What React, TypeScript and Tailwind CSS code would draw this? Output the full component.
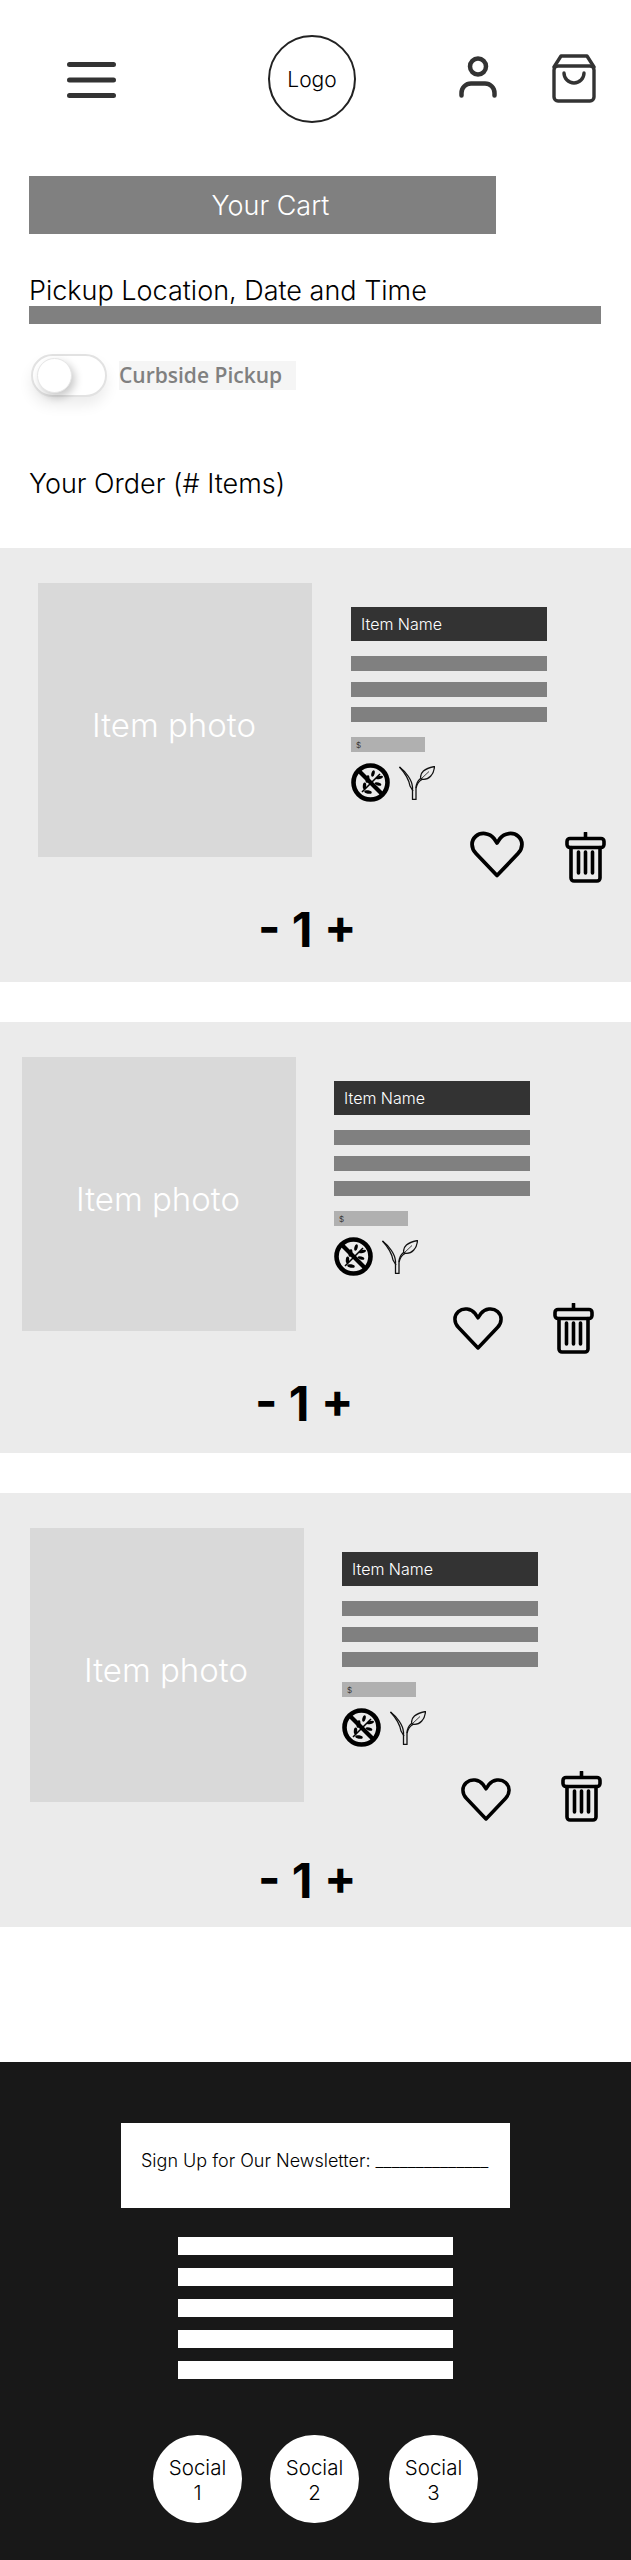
const cards = [
  {
    card: "h-[434px] pl-[38px]",
    col: "ml-[39px]",
    trash: "ml-[41px] mt-px",
    qty: "mt-[23px] pl-[220px]",
  },
  {
    card: "h-[431px] pl-[22px]",
    col: "ml-[38px]",
    trash: "ml-[50px] -mt-[2px]",
    qty: "mt-[23px] pl-[233px]",
  },
  {
    card: "h-[434px] pl-[30px]",
    col: "ml-[38px]",
    trash: "ml-[50px] -mt-[5px]",
    qty: "mt-[29px] pl-[228px]",
  },
];

function MenuIcon() {
  return (
    <svg width="49" height="36" viewBox="0 0 49 36" fill="none" stroke="#333" strokeWidth="5" strokeLinecap="round">
      <path d="M2.5 2.5h44M2.5 18h44M2.5 33.5h44" />
    </svg>
  );
}

function UserIcon() {
  return (
    <svg width="38" height="42" viewBox="0 0 38 42" fill="none" stroke="#333" strokeWidth="4.5" strokeLinecap="round">
      <circle cx="19" cy="10.5" r="8" />
      <path d="M2.5 39.5V37a9.5 9.5 0 0 1 9.5-9.5h14a9.5 9.5 0 0 1 9.5 9.5v2.5" />
    </svg>
  );
}

function BagIcon() {
  return (
    <svg width="44" height="49" viewBox="0 0 44 49" fill="none" stroke="#333" strokeWidth="3.4" strokeLinecap="round" strokeLinejoin="round">
      <rect x="2" y="12" width="40" height="35" rx="4" />
      <path d="M2 13 9 2h26l7 11" />
      <path d="M12 19a10 10 0 0 0 20 0" />
    </svg>
  );
}

function NoGrainIcon() {
  return (
    <svg width="39" height="39" viewBox="0 0 39 39" fill="none" stroke="#000">
      <circle cx="19.5" cy="19.5" r="17" strokeWidth="4.6" />
      <path d="M7 7l25 25" strokeWidth="4.2" />
      <path d="M11 29 29 11" strokeWidth="1.6" />
      <g fill="#000" stroke="none">
        <ellipse cx="22" cy="10.5" rx="1.6" ry="3.4" transform="rotate(15 22 10.5)" />
        <ellipse cx="28.5" cy="14.5" rx="3.6" ry="1.5" transform="rotate(-15 28.5 14.5)" />
        <ellipse cx="27" cy="21" rx="3.4" ry="1.5" transform="rotate(15 27 21)" />
        <ellipse cx="16.5" cy="16" rx="1.8" ry="3.8" transform="rotate(10 16.5 16)" />
        <ellipse cx="13.5" cy="23" rx="1.7" ry="3.4" transform="rotate(5 13.5 23)" />
        <ellipse cx="17" cy="29" rx="3.8" ry="1.7" transform="rotate(10 17 29)" />
      </g>
    </svg>
  );
}

function SproutIcon() {
  return (
    <svg width="36" height="34" viewBox="0 0 36 34" fill="none" stroke="#111" strokeWidth="1.3" strokeLinejoin="round">
      <path d="M0.5 1C7 6 13 14 13.5 21L13.5 33.5H17V22C17 18 19 14.5 22 12" />
      <path d="M0.5 1C6 7 10 14 11 20L14 25" />
      <path d="M17 22C18 18 20 15 23 13.5" />
      <path d="M22 13C20 7 26 2 35.5 0.5 35 8 30 15 22 13Z" />
      <path d="M22 13 30 5.5" strokeWidth="0.8" />
    </svg>
  );
}

function HeartIcon() {
  return (
    <svg width="54" height="47" viewBox="0 0 54 47" fill="none" stroke="#000" strokeWidth="3.8" strokeLinejoin="round">
      <path d="M27 44.5 6 22.5C.8 17 .8 9.5 5.8 5.2 11 .8 19.5 1.8 24 7.5L27 12l3-4.5C34.5 1.8 43 .8 48.2 5.2c5 4.3 5 11.8-.2 17.3Z" />
    </svg>
  );
}

function TrashIcon() {
  return (
    <svg width="41" height="51" viewBox="0 0 41 51" fill="none" stroke="#000" strokeWidth="3.6" strokeLinecap="round" strokeLinejoin="round">
      <path d="M20.5 1v5" />
      <rect x="2" y="6.5" width="37" height="9" rx="3" />
      <path d="M6 15.5V46a3 3 0 0 0 3 3h23a3 3 0 0 0 3-3V15.5" />
      <path d="M13.5 20v21M20.5 20v21M27.5 20v21" />
    </svg>
  );
}

function CartItem({ card, col, trash, qty }: { card: string; col: string; trash: string; qty: string }) {
  return (
    <div className={`flex flex-col bg-[#ebebeb] pt-[35px] ${card}`}>
      <div className="flex h-[300px] items-start">
        <div className="flex h-[274px] w-[274px] shrink-0 items-center justify-center bg-[#d9d9d9] pt-[12px] pr-[2px] text-[33px] font-light text-white">
          Item photo
        </div>
        <div className={`w-[260px] pt-[24px] ${col}`}>
          <div className="flex h-[34px] w-[196px] items-center bg-[#333333] pl-[10px] text-[16px] font-light text-white">
            Item Name
          </div>
          <div className="mt-[15px] h-[15px] w-[196px] bg-[#808080]" />
          <div className="mt-[11px] h-[15px] w-[196px] bg-[#808080]" />
          <div className="mt-[10px] h-[15px] w-[196px] bg-[#808080]" />
          <div className="mt-[15px] flex h-[15px] w-[74px] items-center bg-[#b0b0b0] pl-[5px] text-[8px] text-[#333]">
            $
          </div>
          <div className="mt-[11px] flex items-center">
            <NoGrainIcon />
            <div className="ml-[9px]">
              <SproutIcon />
            </div>
          </div>
          <div className="mt-[29px] flex items-start pl-[119px]">
            <HeartIcon />
            <div className={`shrink-0 ${trash}`}>
              <TrashIcon />
            </div>
          </div>
        </div>
      </div>
      <div className={`whitespace-pre text-[48px] leading-[48px] font-bold text-black ${qty}`}>- 1 +</div>
    </div>
  );
}

export default function App() {
  return (
    <div className="h-[2560px] w-full overflow-hidden bg-white font-['Inter',sans-serif] text-black">
      <header className="flex h-[140px] items-start pt-[35px]">
        <div className="mt-[27px] ml-[67px]">
          <MenuIcon />
        </div>
        <div className="ml-[152px] flex h-[88px] w-[88px] shrink-0 items-center justify-center rounded-full border-2 border-[#222] pt-[2px] text-[21px] font-light">
          Logo
        </div>
        <div className="mt-[21px] ml-[103px]">
          <UserIcon />
        </div>
        <div className="mt-[19px] ml-[55px]">
          <BagIcon />
        </div>
      </header>

      <div className="px-[29px]">
        <div className="mt-[36px] flex h-[58px] w-[467px] items-center justify-center bg-[#808080] pt-[2px] pl-[16px] text-[27px] font-light text-white">
          Your Cart
        </div>
        <h2 className="mt-[42px] text-[27px] leading-[30px] font-[350]">Pickup Location, Date and Time</h2>
        <div className="h-[18px] w-[572px] bg-[#808080]" />

        <div className="mt-[30px] flex items-center pl-[2px]">
          <div className="relative h-[43px] w-[76px] rounded-full border-2 border-[#e2e2e2] bg-white shadow-[0_8px_14px_rgba(0,0,0,0.08)]">
            <div className="absolute top-[2px] left-[4px] h-[35px] w-[35px] rounded-full border border-[#e6e6e6] bg-white shadow-[3px_4px_8px_rgba(0,0,0,0.22)]" />
          </div>
          <div className="ml-[12px] flex h-[29px] w-[177px] items-center bg-[#f5f5f5] font-['Open_Sans',sans-serif] text-[21px] font-semibold text-[#808080]">
            Curbside Pickup
          </div>
        </div>

        <h2 className="mt-[70px] text-[27px] leading-[34px] font-[350]">Your Order (# Items)</h2>
      </div>

      <main className="mt-[47px] flex flex-col gap-[40px]">
        {cards.map((c, i) => (
          <CartItem key={i} {...c} />
        ))}
      </main>

      <footer className="mt-[135px] h-[498px] bg-[#181818] pt-[61px]">
        <div className="ml-[121px] h-[85px] w-[389px] whitespace-nowrap bg-white pt-[26px] pl-[20px] text-[18px] leading-[24px] font-[350]">
          Sign Up for Our Newsletter: ______________
        </div>
        <div className="mt-[29px] flex flex-col items-center gap-[13px]">
          <div className="h-[18px] w-[275px] bg-white" />
          <div className="h-[18px] w-[275px] bg-white" />
          <div className="h-[18px] w-[275px] bg-white" />
          <div className="h-[18px] w-[275px] bg-white" />
          <div className="h-[18px] w-[275px] bg-white" />
        </div>
        <div className="mt-[56px] flex pl-[153px] text-[20.5px] leading-[25px] font-[350]">
          <div className="flex h-[88px] w-[89px] items-center justify-center rounded-full bg-white pt-[2px] text-center">
            Social
            <br />1
          </div>
          <div className="ml-[28px] flex h-[88px] w-[89px] items-center justify-center rounded-full bg-white pt-[2px] text-center">
            Social
            <br />2
          </div>
          <div className="ml-[30px] flex h-[88px] w-[89px] items-center justify-center rounded-full bg-white pt-[2px] text-center">
            Social
            <br />3
          </div>
        </div>
      </footer>
    </div>
  );
}
